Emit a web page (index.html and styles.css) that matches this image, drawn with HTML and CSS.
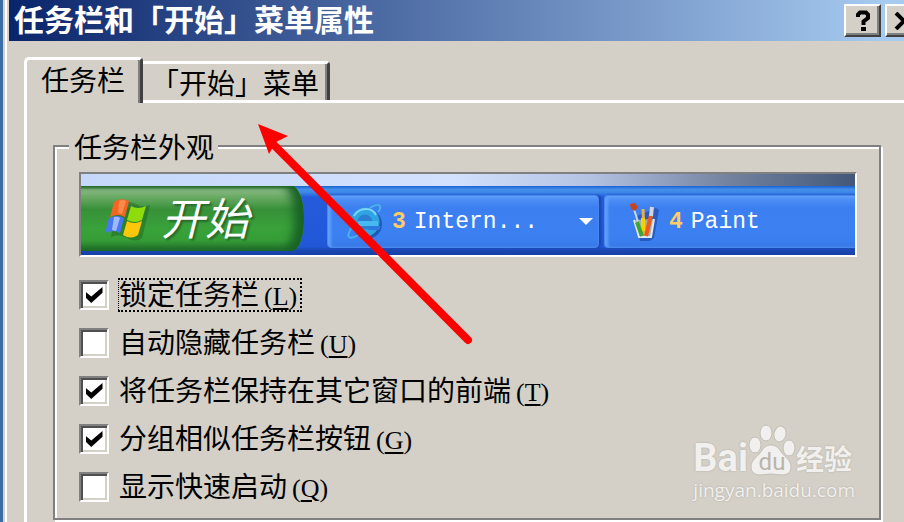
FILE: index.html
```html
<!DOCTYPE html>
<html lang="zh-CN">
<head>
    <meta charset="utf-8">
    <title>任务栏和「开始」菜单属性</title>
    <meta name="viewport" content="width=device-width, initial-scale=1.0">
    <link rel="stylesheet" href="styles.css">
</head>
<body>
    <div class="dialog">
        <header class="titlebar">
            <h1>任务栏和「开始」菜单属性</h1>
            <button type="button" class="caption-button" aria-label="帮助">
                <svg width="16" height="22" viewBox="0 0 16 22"><path d="M3 7V4.500L5 2.500h6l2 2V8L8.500 11.500V15" fill="none" stroke="#000" stroke-width="4"/><rect x="6" y="17" width="5" height="4"/></svg>
            </button>
            <button type="button" class="caption-button" aria-label="关闭">
                <svg width="20" height="18" viewBox="0 0 20 18"><path d="M2 1l16 16M18 1L2 17" stroke="#000" stroke-width="4"/></svg>
            </button>
        </header>

        <div class="tabs" role="tablist">
            <button type="button" class="tab active" role="tab" aria-selected="true">任务栏</button>
            <button type="button" class="tab" role="tab" aria-selected="false">「开始」菜单</button>
        </div>

        <main class="pane">
            <fieldset>
                <legend>任务栏外观</legend>

                <div class="preview">
                    <div class="desktop"></div>
                    <div class="taskbar">
                        <button type="button" class="start">
                            <svg width="46" height="44" viewBox="0 0 46 44">
                                <path d="M10 5q7-5 16-1l3 1q5 4 14 1l-8 33q-6 5-15 0-7-5-16-1z" fill="#184d18" opacity=".35" transform="translate(2 2)"/>
                                <path d="M9 5q6-5 15-1l-4 16q-7-4-15 0z" fill="#f26522"/>
                                <path d="M14 4q4-2 7 0l-4 13-4-1z" fill="#ff9a5c" opacity=".7"/>
                                <path d="M26 9q7 4 15 0l-4 14q-7 4-15 0z" fill="#8fdc0d"/>
                                <path d="M4 21q8-4 15 0l-4 15q-7-4-15 0z" fill="#4877f4"/>
                                <path d="M9 20q4-1 6 1l-4 13-4-1z" fill="#b4caff" opacity=".8"/>
                                <path d="M22 24q7 4 15 0l-4 14q-7 5-15 0z" fill="#fcc60b"/>
                            </svg>
                            <span>开始</span>
                        </button>
                        <button type="button" class="task">
                            <svg width="38" height="40" viewBox="0 0 38 40">
                                <circle cx="21" cy="22" r="15" fill="#16479c" opacity=".7"/>
                                <circle cx="19" cy="20" r="11" fill="#2a7fd0" stroke="#2fa4e2" stroke-width="7"/>
                                <path d="M12 19h20v5H12z" fill="#45b9f0"/>
                                <path d="M23 24h12l-2 4H22z" fill="#2f78de"/>
                                <path d="M8 14q4-7 12-7 7 0 10 6" fill="none" stroke="#7fd6fa" stroke-width="2"/>
                                <path d="M24 6q8-5 10-2 1 3-2 6M6 25q-5 8-3 10 3 2 9-2" fill="none" stroke="#48b2ea" stroke-width="2"/>
                            </svg>
                            <b>3</b>
                            <span>Intern...</span>
                            <i class="drop"></i>
                        </button>
                        <button type="button" class="task last">
                            <svg width="32" height="40" viewBox="0 0 32 40">
                                <path d="M8 14l19-8 3 2-5 28-4 3H11z" fill="#173f96" opacity=".55"/>
                                <path d="M5 18l5 17h12l3-18" fill="#9fb0bd" stroke="#dfe8ee" stroke-width="2"/>
                                <path d="M5 7l8 26" stroke="#c9d8e6" stroke-width="2"/>
                                <path d="M14 7l1 26" stroke="#e9ae4c" stroke-width="3"/>
                                <path d="M14 16v13" stroke="#f4d200" stroke-width="4"/>
                                <path d="M8 20l5 14" stroke="#42a335" stroke-width="4"/>
                                <path d="M22 13l-5 21" stroke="#f05a16" stroke-width="4"/>
                                <path d="M23 5l-1 9" stroke="#d3d4e0" stroke-width="4"/>
                                <path d="M1 2l5-1 3 4-3 4-4-2z" fill="#c8451c"/>
                            </svg>
                            <b>4</b>
                            <span>Paint</span>
                        </button>
                    </div>
                </div>

                <div class="options">
                    <div class="option">
                        <input type="checkbox" id="lock" checked>
                        <label for="lock" class="focused">锁定任务栏<span>(<u>L</u>)</span></label>
                    </div>
                    <div class="option">
                        <input type="checkbox" id="autohide">
                        <label for="autohide">自动隐藏任务栏<span>(<u>U</u>)</span></label>
                    </div>
                    <div class="option">
                        <input type="checkbox" id="ontop" checked>
                        <label for="ontop">将任务栏保持在其它窗口的前端<span>(<u>T</u>)</span></label>
                    </div>
                    <div class="option">
                        <input type="checkbox" id="group" checked>
                        <label for="group">分组相似任务栏按钮<span>(<u>G</u>)</span></label>
                    </div>
                    <div class="option">
                        <input type="checkbox" id="quick">
                        <label for="quick">显示快速启动<span>(<u>Q</u>)</span></label>
                    </div>
                </div>
            </fieldset>
        </main>
    </div>

    <!-- Red pointer to the second tab -->
    <svg class="pointer" width="220" height="224" viewBox="0 0 220 224">
        <path d="M18 22L213 218" stroke="#f00" stroke-width="8" stroke-linecap="round"/>
        <path d="M3 2l30 12-12 6-7 12z" fill="#f00"/>
    </svg>

    <div class="watermark">
        <div class="brand">
            <span class="bai">Bai</span>
            <span class="paw">
                <svg width="48" height="54" viewBox="0 0 48 54">
                    <g fill="#f1f0ee" stroke="#c3beb4" stroke-width="1">
                        <ellipse cx="7" cy="22" rx="6" ry="8"/>
                        <ellipse cx="18" cy="10" rx="6" ry="8"/>
                        <ellipse cx="32" cy="11" rx="6" ry="8" transform="rotate(12 32 11)"/>
                        <ellipse cx="41" cy="25" rx="6" ry="8"/>
                        <path d="M23 22c6 0 8 4 11 8s9 7 9 14c0 6-4 8-9 8-4 0-7-1-11-1s-7 1-11 1c-5 0-9-3-9-8 0-7 6-10 9-14s5-8 11-8z"/>
                    </g>
                </svg>
                <span>du</span>
            </span>
            <span class="jingyan">经验</span>
        </div>
        <div class="domain">jingyan.baidu.com</div>
    </div>
</body>
</html>
```
FILE: styles.css
```css
* {
    box-sizing: border-box;
}

body {
    margin: 0;
    min-height: 100vh;
    overflow: hidden;
    position: relative;
    background: #3a6ea5;
    color: #000;
    font-family: "Noto Sans CJK SC", sans-serif;
    font-size: 28px;
    line-height: 28px;
}

button {
    margin: 0;
    padding: 0;
    border: 0;
    background: none;
    color: inherit;
    font: inherit;
}

svg {
    display: block;
    flex: none;
}

.dialog {
    margin-left: 3px;
    padding-left: 4px;
    min-height: 100vh;
    background: #d4d0c8;
    border-left: 2px solid #d4d0c8;
    box-shadow: inset 2px 0 0 #fff;
}

/* Title bar */
.titlebar {
    display: flex;
    align-items: center;
    gap: 4px;
    height: 41px;
    padding-left: 5px;
    margin-right: -18px;
    background: linear-gradient(to right, #0a246a, #a6caf0 96%);
}

.titlebar h1 {
    flex: 1;
    margin: 0;
    color: #fff;
    font-family: "Liberation Sans", "Noto Sans CJK SC", sans-serif;
    font-size: 30px;
    font-weight: bold;
    line-height: 36px;
}

.caption-button {
    display: flex;
    align-items: center;
    justify-content: center;
    width: 37px;
    height: 33px;
    background: #d4d0c8;
    border: 2px solid;
    border-color: #fff #404040 #404040 #fff;
    box-shadow: inset -2px -2px 0 #808080;
}

/* Tabs */
.tabs {
    display: flex;
    align-items: flex-end;
    margin: 16px 0 0 15px;
}

.tab {
    height: 39px;
    padding: 0 8px;
    border-top: 3px solid #fff;
    border-right: 3px solid #404040;
    border-radius: 0 4px 0 0;
    box-shadow: inset -2px 0 0 #808080;
}

.tab.active {
    height: 46px;
    margin-bottom: -3px;
    padding: 0 15px 6px 14px;
    position: relative;
    background: #d4d0c8;
    border-left: 3px solid #fff;
    border-radius: 5px 4px 0 0;
}

.pane {
    margin-left: 15px;
    padding: 29px 23px 0 26px;
    min-height: calc(100vh - 100px);
    border-top: 3px solid #fff;
    border-left: 3px solid #fff;
}

/* Group box */
fieldset {
    min-width: 0;
    margin: 0;
    padding: 12px 22px 14px 24px;
    border: 2px solid #808080;
    box-shadow: 2px 2px 0 #fff, inset 2px 2px 0 #fff;
}

legend {
    margin-left: -10px;
    padding: 0 4px 0 5px;
    background: #d4d0c8;
}

/* Taskbar preview */
.preview {
    border: 2px solid;
    border-color: #808080 #fff #fff #808080;
    overflow: hidden;
}

.desktop {
    height: 12px;
    background: linear-gradient(to right, #c5d8fb, #d2e1fd 48%, #b3c2e1 66%, #71819e 84%, #435879);
}

.taskbar {
    display: flex;
    height: 69px;
    padding-bottom: 4px;
    background: linear-gradient(#1b62d2, #438fea 5%, #3d88e7 9%, #245cdc 16%, #2158d8 88%, #1c49b6 92%, #173fa5);
}

.start {
    display: flex;
    align-items: center;
    gap: 10px;
    width: 223px;
    padding-left: 24px;
    color: #fff;
    background: linear-gradient(#266c2b, #92c18c 6%, #6dac67 16%, #379038 36%, #39a23a 65%, #369c37 84%, #216f28);
    border-radius: 0 12px 12px 0 / 0 32px 32px 0;
    box-shadow: inset -10px 0 10px #196326;
}

.start span {
    padding-bottom: 6px;
    font-size: 44px;
    font-style: italic;
    line-height: 48px;
    text-shadow: 2px 2px 2px #26692a;
}

.task {
    display: flex;
    align-items: center;
    gap: 8px;
    width: 272px;
    height: 53px;
    margin: 9px 0 0 23px;
    padding: 0 5px 0 18px;
    color: #fff;
    font-family: "Liberation Mono", monospace;
    font-size: 23px;
    background: linear-gradient(#5596f8, #3c7ff0 22%, #3b80f2 80%, #3979e8);
    border: 1px solid #4a88ee;
    border-radius: 4px;
    box-shadow: 2px 0 2px #1947ae, inset 3px 1px 3px #62a1fa;
}

.task b {
    color: #ffcc66;
}

.task .drop {
    margin-left: auto;
    border: 7px solid transparent;
    border-top-color: #fff;
    border-bottom: 0;
}

.task.last {
    flex: 1;
    margin-left: 5px;
    padding-left: 24px;
    border-right: 0;
    border-radius: 4px 0 0 4px;
}

/* Check boxes */
.options {
    display: flex;
    flex-direction: column;
    gap: 14px;
    margin-top: 21px;
}

.option {
    display: flex;
    align-items: center;
    gap: 9px;
    height: 34px;
}

.option input {
    display: grid;
    place-items: center;
    flex: none;
    appearance: none;
    width: 30px;
    height: 30px;
    margin: 0;
    background: #fff;
    border: 2px solid;
    border-color: #808080 #fff #fff #808080;
    box-shadow: inset 2px 2px 0 #505050, inset -2px -2px 0 #d4d0c8;
}

.option input:checked::before {
    content: "";
    width: 17px;
    height: 16px;
    background: #000;
    clip-path: polygon(0 30%, 34% 60%, 100% 0, 100% 36%, 34% 100%, 0 66%);
}

.option label {
    height: 34px;
    padding-right: 3px;
    line-height: 26px;
    border: 2px solid transparent;
    border-left-width: 1px;
    white-space: nowrap;
}

.option label.focused {
    border: 2px dotted #000;
    border-left-width: 1px;
}

.option label span {
    margin-left: 5px;
    font-family: "Liberation Serif", serif;
    font-size: 26px;
}

.option u {
    text-decoration-thickness: 2px;
    text-underline-offset: 3px;
}

/* Overlays */
.pointer {
    position: absolute;
    left: 255px;
    top: 122px;
}

.watermark {
    position: absolute;
    right: 49px;
    bottom: 19px;
    color: #f1f0ee;
    font-family: "Open Sans", "Noto Sans CJK SC", sans-serif;
    text-shadow: 0 0 2px #aaa59b;
}

.brand {
    display: flex;
    align-items: flex-end;
    height: 54px;
}

.bai {
    font-family: Roboto, sans-serif;
    font-size: 38px;
    font-weight: bold;
    line-height: 38px;
}

.paw {
    display: grid;
    justify-items: center;
    align-items: end;
}

.paw > * {
    grid-area: 1 / 1;
}

.paw span {
    color: #b9b4aa;
    font-family: Roboto, sans-serif;
    font-size: 24px;
    line-height: 30px;
    text-shadow: none;
}

.jingyan {
    font-size: 28px;
    font-weight: bold;
    line-height: 36px;
}

.domain {
    font-size: 19px;
    line-height: 26px;
}
```
